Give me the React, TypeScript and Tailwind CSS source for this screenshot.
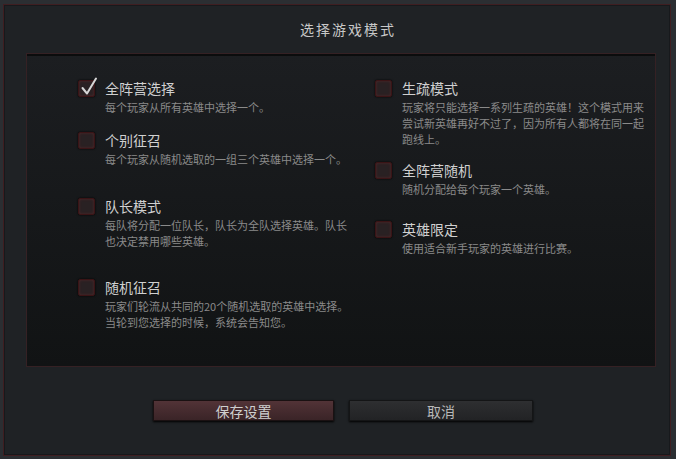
const font = { fontFamily: '"Noto Sans CJK SC", "Liberation Sans", sans-serif' };

type Mode = { title: string; desc: string[]; checked?: boolean; gap: string };

const leftModes: Mode[] = [
  { title: '全阵营选择', desc: ['每个玩家从所有英雄中选择一个。'], checked: true, gap: 'mt-0' },
  { title: '个别征召', desc: ['每个玩家从随机选取的一组三个英雄中选择一个。'], gap: 'mt-[16px]' },
  { title: '队长模式', desc: ['每队将分配一位队长，队长为全队选择英雄。队长', '也决定禁用哪些英雄。'], gap: 'mt-[30px]' },
  { title: '随机征召', desc: ['玩家们轮流从共同的20个随机选取的英雄中选择。', '当轮到您选择的时候，系统会告知您。'], gap: 'mt-[29px]' },
];

const rightModes: Mode[] = [
  { title: '生疏模式', desc: ['玩家将只能选择一系列生疏的英雄！这个模式用来', '尝试新英雄再好不过了，因为所有人都将在同一起', '跑线上。'], gap: 'mt-0' },
  { title: '全阵营随机', desc: ['随机分配给每个玩家一个英雄。'], gap: 'mt-[14px]' },
  { title: '英雄限定', desc: ['使用适合新手玩家的英雄进行比赛。'], gap: 'mt-[23px]' },
];

function Checkbox({ checked }: { checked?: boolean }) {
  return (
    <div className="relative w-[17px] h-[17px] mt-[1px] shrink-0 rounded-[2px] border border-[#3a1416] bg-[#292123] shadow-[inset_0_0_3px_#552629,0_0_2px_#000]">
      {checked && (
        <svg className="absolute left-[1px] -top-[4px]" width="18" height="20" viewBox="0 0 18 20">
          <path d="M2.5 11 L7 16.5 L16 1.5" fill="none" stroke="#d6d6d6" strokeWidth="2" strokeLinecap="round" strokeLinejoin="round" />
        </svg>
      )}
    </div>
  );
}

function ModeItem({ m }: { m: Mode }) {
  return (
    <div className={`flex gap-[10px] ${m.gap}`}>
      <Checkbox checked={m.checked} />
      <div>
        <div className="text-[14px] leading-[18px] text-[#d0d0d0]">{m.title}</div>
        <div className="mt-[2px] w-[246px] text-[11px] leading-[16px] text-[#8a8a8a]">
          {m.desc.map((d) => (
            <div key={d}>{d}</div>
          ))}
        </div>
      </div>
    </div>
  );
}

export default function App() {
  return (
    <div className="w-[676px] h-[459px] bg-[#2b2e32] pt-[4px] pl-[3px] pr-[5px] pb-[3px]" style={font}>
      <div className="h-full flex flex-col border border-[#3f1e21] bg-[#1f2225] shadow-[inset_0_0_0_1px_#17191c]">
        <div className="h-[48px] pl-[22px] flex items-center justify-center text-[14px] tracking-[2px] text-[#c8c8c8]">
          选择游戏模式
        </div>
        <div className="ml-[22px] w-[630px] h-[314px] border border-[#352124] bg-gradient-to-b from-[#1c1e21] to-[#111314] shadow-[inset_0_2px_0_#0b0c0d] pt-[25px] pl-[51px] flex">
          <div className="w-[297px] flex flex-col">
            {leftModes.map((m) => (
              <ModeItem key={m.title} m={m} />
            ))}
          </div>
          <div className="flex flex-col">
            {rightModes.map((m) => (
              <ModeItem key={m.title} m={m} />
            ))}
          </div>
        </div>
        <div className="mt-[33px] ml-[149px] flex gap-[15px]">
          <button className="w-[181px] h-[21px] border border-[#1a1112] bg-gradient-to-b from-[#523337] to-[#3a2427] shadow-[0_1px_2px_#000] text-[14px] leading-[18px] text-[#cfcfcf]" style={font}>
            保存设置
          </button>
          <button className="w-[184px] h-[21px] border border-[#141516] bg-gradient-to-b from-[#2e2f31] to-[#222325] shadow-[0_1px_2px_#000] text-[14px] leading-[18px] text-[#b9b9b9]" style={font}>
            取消
          </button>
        </div>
      </div>
    </div>
  );
}
